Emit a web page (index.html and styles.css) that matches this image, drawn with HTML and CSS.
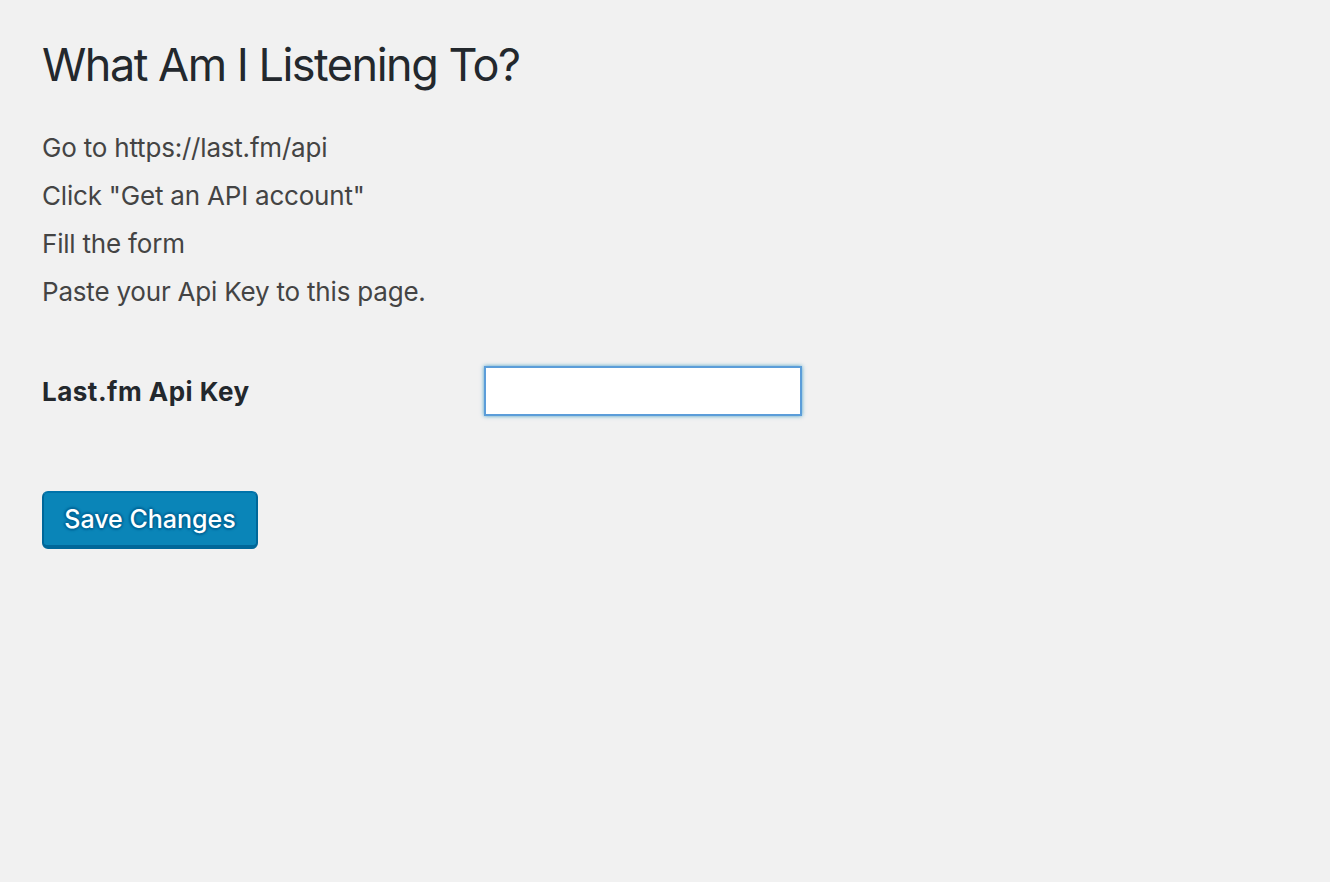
FILE: index.html
```html
<!DOCTYPE html>
<html lang="en">
<head>
<meta charset="utf-8">
<title>What Am I Listening To?</title>
<link rel="stylesheet" href="styles.css">
</head>
<body>
<div class="wrap">
  <h1 class="title">What Am I Listening To?</h1>
  <div class="steps">
    <p>Go to https://last.fm/api</p>
    <p>Click "Get an API account"</p>
    <p>Fill the form</p>
    <p>Paste your Api Key to this page.</p>
  </div>
  <form class="settings">
    <div class="row">
      <label class="row-label" for="apikey">Last.fm Api Key</label>
      <input class="text-input" id="apikey" type="text">
    </div>
    <div class="submit">
      <button type="button" class="button-primary">Save Changes</button>
    </div>
  </form>
</div>
</body>
</html>
```
FILE: styles.css
```css
html, body {
  margin: 0;
  padding: 0;
  background: #f1f1f1;
}
body {
  font-family: Inter, "Noto Sans", "Liberation Sans", sans-serif;
  color: #444;
}
.wrap {
  padding: 35px 42px 0 42px;
}
.title {
  margin: 0;
  font-size: 45px;
  font-weight: 400;
  line-height: 60px;
  letter-spacing: -1.5px;
  color: #23282d;
}
.steps {
  margin-top: 29px;
}
.steps p {
  margin: 0;
  font-size: 26px;
  line-height: 48px;
  letter-spacing: -0.2px;
  color: #444;
}
.settings {
  margin-top: 50px;
}
.row {
  display: flex;
  align-items: center;
}
.row-label {
  width: 442px;
  font-size: 26px;
  font-weight: 700;
  letter-spacing: 0.5px;
  color: #23282d;
}
.text-input {
  box-sizing: border-box;
  width: 318px;
  height: 50px;
  margin: 0;
  padding: 4px 8px;
  font-size: 26px;
  font-family: inherit;
  background: #fff;
  border: 2px solid #5b9dd9;
  border-radius: 0;
  box-shadow: 0 0 4px rgba(30, 140, 190, 0.8);
  outline: none;
}
.submit {
  margin-top: 75px;
}
.button-primary {
  box-sizing: border-box;
  width: 216px;
  height: 58px;
  padding: 0;
  font-family: inherit;
  font-size: 25px;
  font-weight: 500;
  color: #fff;
  background: #0a85b8;
  border: 2px solid #0073aa;
  border-color: #0073aa #006799 #006799;
  border-bottom-width: 4px;
  border-radius: 6px;
  text-shadow: 0 -2px 2px #006799, 2px 0 2px #006799, 0 2px 2px #006799, -2px 0 2px #006799;
  cursor: pointer;
}
```
